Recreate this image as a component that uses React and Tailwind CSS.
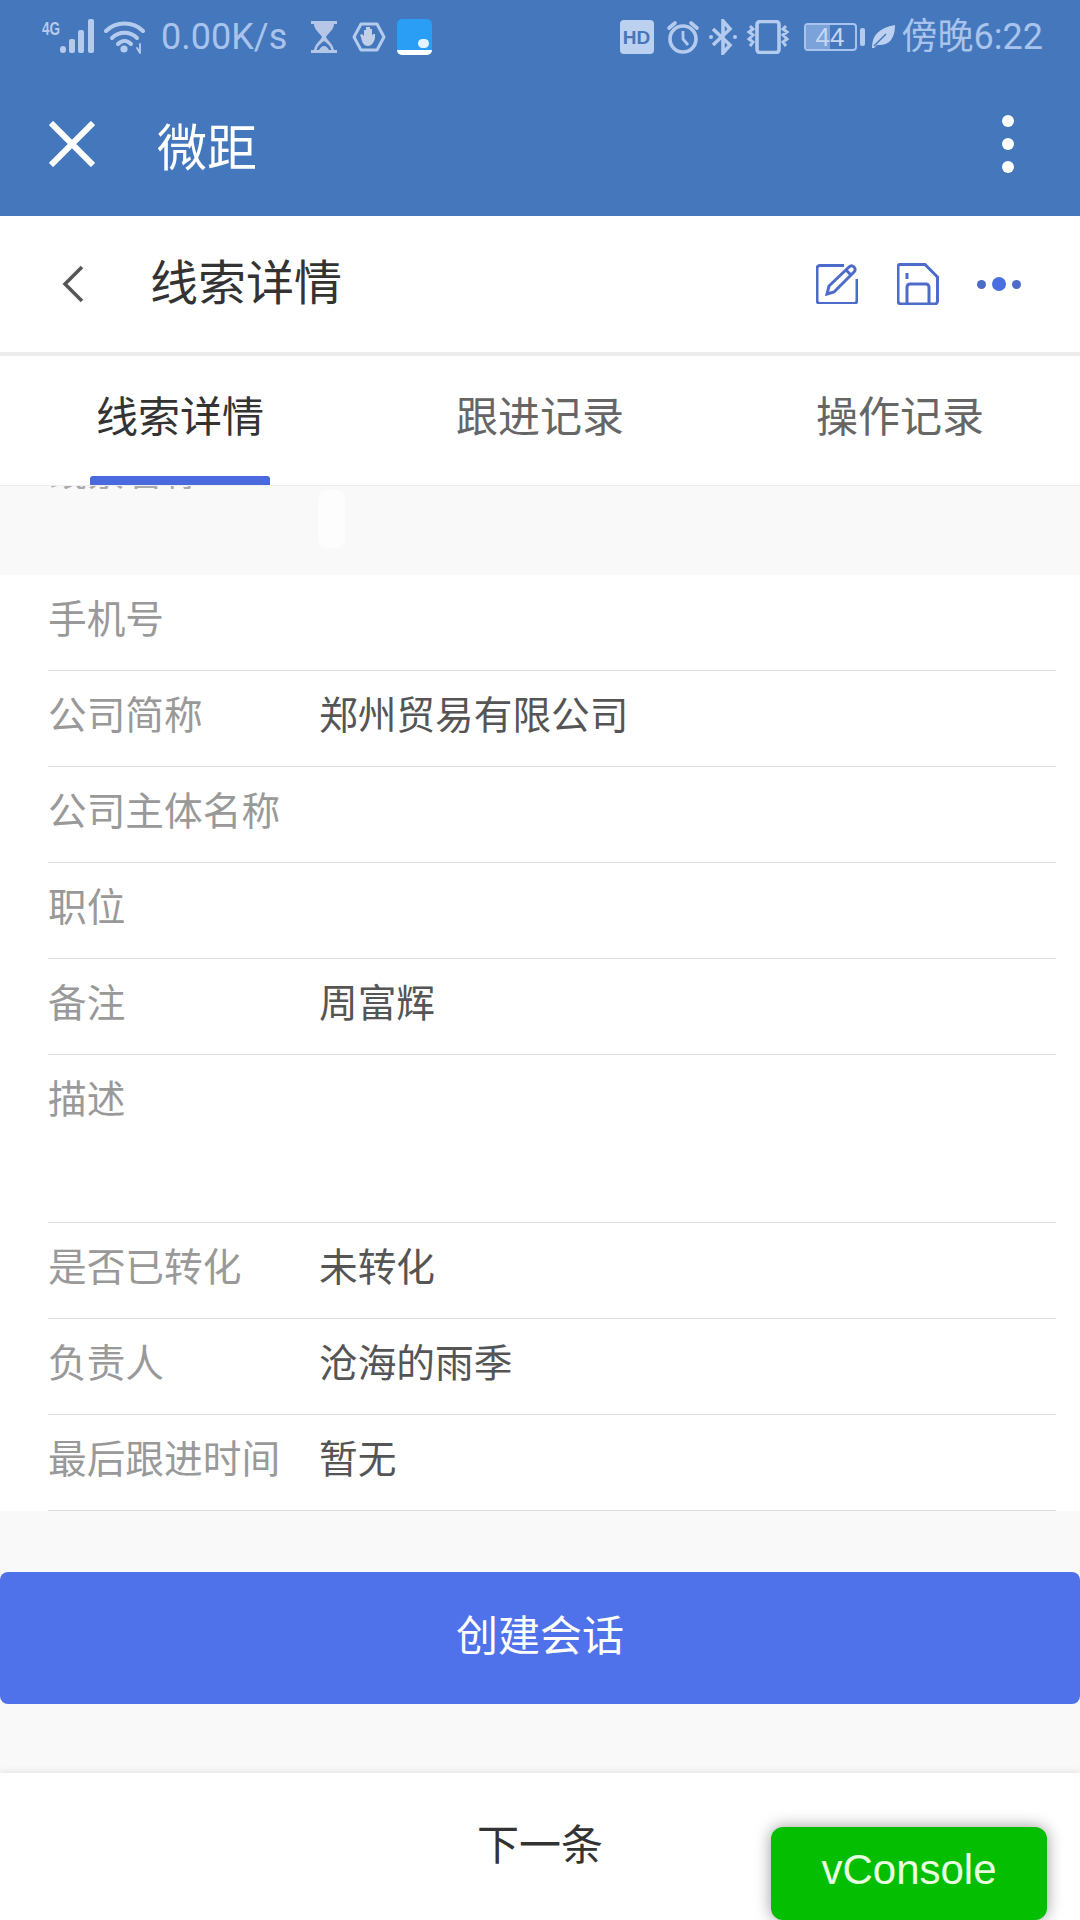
import React from 'react'

const rows = [
  { label: '手机号', value: '' },
  { label: '公司简称', value: '郑州贸易有限公司' },
  { label: '公司主体名称', value: '' },
  { label: '职位', value: '' },
  { label: '备注', value: '周富辉' },
  { label: '描述', value: '', tall: true },
  { label: '是否已转化', value: '未转化' },
  { label: '负责人', value: '沧海的雨季' },
  { label: '最后跟进时间', value: '暂无' },
]

const SignalIcon = () => (
  <svg width="54" height="36" viewBox="0 0 54 36" fill="#b4cbee">
    <text x="0" y="16" fontSize="18" fontWeight="700" textLength="18" lengthAdjust="spacingAndGlyphs" fontFamily="'Liberation Sans', sans-serif">4G</text>
    <rect x="18" y="27" width="6" height="7" rx="3" />
    <rect x="27" y="20" width="6" height="14" rx="2" />
    <rect x="36" y="11" width="6" height="23" rx="2" />
    <rect x="46" y="0" width="6" height="34" rx="2" />
  </svg>
)

const WifiIcon = () => (
  <svg width="42" height="34" viewBox="0 0 42 34" fill="none" stroke="#b4cbee" strokeWidth="4" strokeLinecap="round">
    <path d="M2 11C12 1 29 1 39 11" />
    <path d="M8 18C15 11 26 11 33 18" />
    <path d="M14 24C18 20 23 20 27 24" />
    <circle cx="20" cy="29" r="3.6" fill="#b4cbee" stroke="none" />
    <path d="M36 24v9M36 33l-3-5" strokeWidth="1.800" />
  </svg>
)

const HourglassIcon = () => (
  <svg width="26" height="32" viewBox="0 0 26 32" fill="#b6c6e6">
    <rect x="0" y="0" width="26" height="3" />
    <rect x="0" y="29" width="26" height="3" />
    <path d="M3 3h20c0 6-6 9-8 13h-4C9 12 3 9 3 3z" />
    <path d="M11 16c-2 4-7 7-8 13h2.600c1-5 5-7 7.400-9 2.400 2 6.400 4 7.400 9H23c-1-6-6-9-8-13z" />
    <path d="M8 29c1-2 3-4 5-4s4 2 5 4z" />
  </svg>
)

const HandIcon = () => (
  <svg width="34" height="30" viewBox="0 0 34 30" fill="none">
    <path d="M9 2h16l7 13-7 13H9L2 15z" stroke="#b4cbee" strokeWidth="3" strokeLinejoin="round" />
    <path d="M9 15l-1-2 2-1 2 2V8h2v5V5h2v8V5h2v8V7h2v7l1-2h2v4c-1 4-3 8-7 8s-6-3-7-9z" fill="#c2cfe9" />
  </svg>
)

const AppIcon = () => (
  <div className="w-[35px] h-[36px] rounded-[5px] bg-[#2a9df4] relative overflow-hidden">
    <div className="absolute bottom-0 left-0 right-0 h-[5px] bg-white" />
    <div className="absolute right-[3px] bottom-[7px] w-[11px] h-[9px] rounded-full bg-[#e3f3ff]" />
  </div>
)

const HdIcon = () => (
  <div className="w-[34px] h-[34px] rounded-[4px] bg-[#bcd0ef] flex items-center justify-center text-[#4577bc] text-[19px] font-bold leading-none [font-family:'Liberation_Sans',sans-serif]">
    HD
  </div>
)

const AlarmIcon = () => (
  <svg width="34" height="34" viewBox="0 0 34 34" fill="none" stroke="#b4cbee" strokeWidth="3.600">
    <circle cx="17" cy="19" r="13" />
    <path d="M17 11v8l5 6" strokeWidth="2.800" />
    <path d="M3 8l6-5M31 8l-6-5" strokeLinecap="round" />
  </svg>
)

const BluetoothIcon = () => (
  <svg width="28" height="36" viewBox="0 0 28 36" fill="none" stroke="#b4cbee" strokeWidth="3.600">
    <path d="M4 10l17 16-7 8V2l7 8L4 26" />
    <circle cx="2" cy="18" r="2" fill="#b4cbee" stroke="none" />
    <circle cx="26" cy="18" r="2" fill="#b4cbee" stroke="none" />
  </svg>
)

const VibrateIcon = () => (
  <svg width="44" height="34" viewBox="0 0 44 34" fill="none" stroke="#b4cbee">
    <rect x="11" y="1.500" width="22" height="31" rx="3" strokeWidth="3.600" />
    <path d="M4 6l3 3-4 3 4 3-4 4 4 3-3 4M40 6l-3 3 4 3-4 3 4 4-4 3 3 4" strokeWidth="3" />
  </svg>
)

const BatteryIcon = () => (
  <div className="flex items-center gap-[3px]">
    <div className="w-[53px] h-[28px] rounded-[4px] border-2 border-[#a9c4ec] relative overflow-hidden flex items-center justify-center">
      <div className="absolute left-0 top-0 bottom-0 w-[24px] bg-[#7ba2d9]" />
      <span className="relative text-[#c5d7f2] text-[26px] leading-none [font-family:'Liberation_Sans',sans-serif]">44</span>
    </div>
    <div className="w-[5px] h-[18px] rounded-[2px] bg-[#b4cbee]" />
  </div>
)

const LeafIcon = () => (
  <svg width="24" height="24" viewBox="0 0 24 24">
    <path d="M1 23C1 10 8 3 24 0c0 14-6 21-18 20L3 23z" fill="#bcd0ef" />
    <path d="M3 21L15 9" stroke="#4577bc" strokeWidth="1.400" />
  </svg>
)

const EditIcon = () => (
  <svg width="42" height="40" viewBox="0 0 42 40" fill="none" stroke="#4d6cc9" strokeWidth="3">
    <path d="M28 1.500H4a3 3 0 0 0-3 3v32a3 3 0 0 0 3 3h34a3 3 0 0 0 3-3V15" />
    <path d="M13 22L33 3c1.500-1.500 3.500-1.500 5 0s1.500 3.500 0 5L18 28l-7 2z" />
    <path d="M30 6l5 5" />
  </svg>
)

const SaveIcon = () => (
  <svg width="42" height="42" viewBox="0 0 42 42" fill="none" stroke="#4d6cc9" strokeWidth="3">
    <path d="M4 1.500h24l12.500 12.500v24a3 3 0 0 1-3 3H4a3 3 0 0 1-3-3v-34a3 3 0 0 1 3-3z" />
    <path d="M10 40V24a3 3 0 0 1 3-3h16a3 3 0 0 1 3 3v16" />
    <path d="M10 10v6" />
  </svg>
)

const App = () => {
  return (
    <div className="w-[1080px] h-[1920px] relative overflow-hidden flex flex-col bg-white [font-family:'Noto_Sans_CJK_SC',sans-serif]">
      {/* wechat header with the phone status bar */}
      <div className="h-[216px] shrink-0 bg-[#4577bc] flex flex-col">
        <div className="h-[74px] pl-[42px] pr-[37px] flex items-center justify-between text-[#a9c4ec]">
          <div className="flex items-center">
            <SignalIcon />
            <div className="ml-[8px]"><WifiIcon /></div>
            <span className="ml-[15px] text-[36px] leading-none [font-family:'Roboto',sans-serif]">0.00K/s</span>
            <div className="ml-[24px]"><HourglassIcon /></div>
            <div className="ml-[15px]"><HandIcon /></div>
            <div className="ml-[11px]"><AppIcon /></div>
          </div>
          <div className="flex items-center">
            <HdIcon />
            <div className="ml-[12px]"><AlarmIcon /></div>
            <div className="ml-[9px]"><BluetoothIcon /></div>
            <div className="ml-[9px]"><VibrateIcon /></div>
            <div className="ml-[14px]"><BatteryIcon /></div>
            <div className="ml-[6px]"><LeafIcon /></div>
            <span className="ml-[7px] text-[36px] leading-none whitespace-nowrap [font-family:'Roboto','Noto_Sans_CJK_SC',sans-serif]">傍晚6:22</span>
          </div>
        </div>
        <div className="flex-1 pl-[49px] pr-[66px] pb-[2px] flex items-center justify-between">
          <div className="flex items-center">
            <svg width="46" height="46" viewBox="0 0 46 46" stroke="#ffffff" strokeWidth="6">
              <path d="M2 2l42 42M44 2L2 44" />
            </svg>
            <span className="ml-[62px] text-[50px] leading-none text-white">微距</span>
          </div>
          <div className="flex flex-col gap-[11px]">
            <div className="w-[12px] h-[12px] rounded-full bg-white" />
            <div className="w-[12px] h-[12px] rounded-full bg-white" />
            <div className="w-[12px] h-[12px] rounded-full bg-white" />
          </div>
        </div>
      </div>

      {/* page title */}
      <div className="h-[136px] shrink-0 pl-[62px] pr-[59px] flex items-center justify-between bg-white">
        <div className="flex items-center">
          <svg width="22" height="38" viewBox="0 0 22 38" fill="none" stroke="#555555" strokeWidth="3.500">
            <path d="M20 2L3 19l17 17" />
          </svg>
          <span className="ml-[66px] -mt-[10px] text-[48px] leading-none text-[#333333]">线索详情</span>
        </div>
        <div className="flex items-center">
          <EditIcon />
          <div className="ml-[39px]"><SaveIcon /></div>
          <div className="ml-[38px] flex items-center gap-[6px]">
            <div className="w-[9px] h-[9px] rounded-full bg-[#4d6cc9]" />
            <div className="w-[14px] h-[14px] rounded-full bg-[#4a6fe0]" />
            <div className="w-[9px] h-[9px] rounded-full bg-[#4d6cc9]" />
          </div>
        </div>
      </div>
      <div className="h-[4px] shrink-0 bg-[#ececec]" />

      {/* tabs */}
      <div className="h-[130px] shrink-0 grid grid-cols-3 border-b border-[#eeeeee] bg-white relative">
        <div className="flex justify-center pt-[37px] text-[42px] leading-none text-[#333333]">线索详情</div>
        <div className="flex justify-center pt-[37px] text-[42px] leading-none text-[#666666]">跟进记录</div>
        <div className="flex justify-center pt-[37px] text-[42px] leading-none text-[#666666]">操作记录</div>
        <div className="absolute left-[90px] bottom-0 w-[180px] h-[9px] rounded-t-[3px] bg-[#4a69dc]" />
      </div>

      {/* row scrolled under the tabs */}
      <div className="h-[89px] shrink-0 bg-[#f9f9f9] relative">
        <div className="h-[3px] pl-[49px] overflow-hidden">
          <div className="-mt-[35px] text-[38px] leading-none text-[#aaaaaa]">线索名称</div>
        </div>
        <div className="absolute left-[318px] top-[4px] w-[27px] h-[58px] rounded-[8px] bg-[#fdfdfd]" />
      </div>

      {/* detail rows */}
      <div className="shrink-0 bg-white">
        {rows.map((row) => (
          <div
            key={row.label}
            className={`ml-[48px] mr-[24px] flex pt-[22px] border-b border-[#dddddd] ${row.tall ? 'h-[168px]' : 'h-[96px]'}`}
          >
            <div className="w-[271px] shrink-0 text-[38.7px] leading-none text-[#999999] whitespace-nowrap">{row.label}</div>
            <div className="text-[38.7px] leading-none text-[#555555] whitespace-nowrap">{row.value}</div>
          </div>
        ))}
      </div>

      {/* create chat */}
      <div className="flex-1 bg-[#f9f9f9] pt-[61px]">
        <div className="h-[132px] pb-[10px] rounded-[8px] bg-[#4f72ea] flex items-center justify-center text-[42px] leading-none text-white">
          创建会话
        </div>
      </div>

      {/* next item */}
      <div className="h-[147px] shrink-0 bg-white shadow-[0_-2px_6px_rgba(0,0,0,0.08)] flex justify-center pt-[48px] text-[42px] leading-none text-[#333333]">
        下一条
      </div>

      <div className="absolute right-[33px] bottom-0 w-[276px] h-[93px] pb-[8px] rounded-[12px] bg-[#04be02] shadow-[0_0_16px_rgba(0,0,0,0.4)] flex items-center justify-center text-[42px] leading-none text-[#e8ffe0] [font-family:'Liberation_Sans',sans-serif]">
        vConsole
      </div>
    </div>
  )
}

export default App
